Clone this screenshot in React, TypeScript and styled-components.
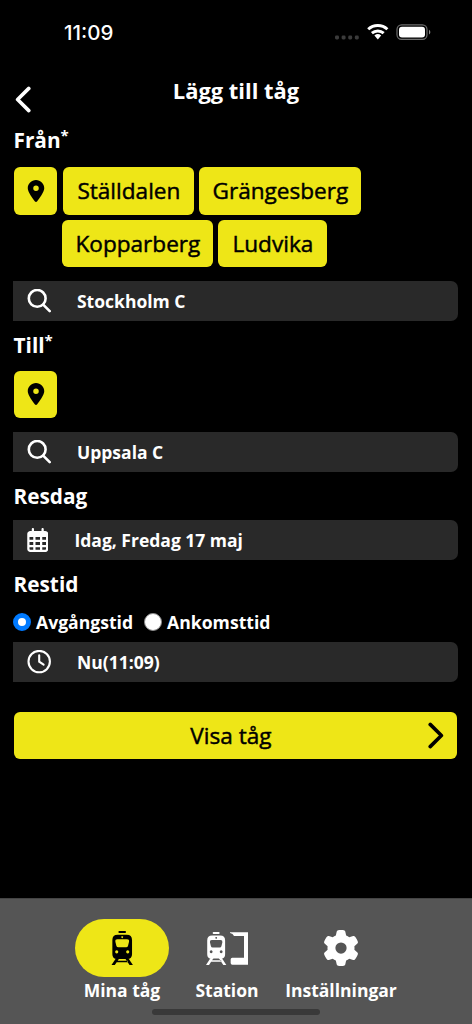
import React, { useState } from "react";
import styled, { createGlobalStyle } from "styled-components";
import { FaGear, FaLocationDot } from "react-icons/fa6";

const GlobalStyle = createGlobalStyle`
  * {
    box-sizing: border-box;
  }
  body {
    margin: 0;
    background: #000;
    font-family: "Open Sans", sans-serif;
  }
  svg {
    display: block;
    flex-shrink: 0;
  }
`;

const Screen = styled.div`
  display: flex;
  flex-direction: column;
  width: 100%;
  height: 1024px;
  background: #000;
  color: #fff;
  overflow: hidden;
`;

const StatusBar = styled.div`
  display: flex;
  align-items: center;
  justify-content: space-between;
  height: 64px;
  padding: 0 41px 0 64px;
`;

const Clock = styled.span`
  font-family: Inter, sans-serif;
  font-size: 20.5px;
  font-weight: 500;
`;

const Header = styled.header`
  display: grid;
  grid-template-columns: 40px 1fr 40px;
  height: 62px;
  padding: 0 14px;
`;

const BackButton = styled.button`
  align-self: start;
  padding: 22px 0 0 1px;
  border: 0;
  background: none;
  color: #fff;
`;

const Title = styled.h1`
  margin: 0;
  font-size: 21.9px;
  font-weight: 700;
  line-height: 54px;
  text-align: center;
`;

const Form = styled.form`
  flex: 1;
  padding: 0 13px;
`;

const Label = styled.h2<{ $height: number; $line: number }>`
  height: ${(p) => p.$height}px;
  margin: 0;
  padding-left: 0.5px;
  font-size: 20.8px;
  font-weight: 700;
  line-height: ${(p) => p.$line}px;

  sup {
    font-size: 15px;
    line-height: 0;
    vertical-align: 7px;
  }
`;

const Shortcuts = styled.div`
  display: flex;
  align-items: flex-start;
  gap: 5px;
  padding-left: 1.4px;
  margin-bottom: 14px;
`;

const Chips = styled.div`
  display: flex;
  flex-wrap: wrap;
  gap: 5px;
  width: 320px;
`;

const YellowButton = styled.button<{ $width?: number; $push?: number }>`
  display: flex;
  align-items: center;
  justify-content: center;
  width: ${(p) => (p.$width ? `${p.$width}px` : "auto")};
  height: 47.5px;
  margin: 0 0 0 ${(p) => p.$push || 0}px;
  padding: 0;
  border: 0;
  border-radius: 6px;
  background: #eee617;
  color: #000;
  font-family: inherit;
  font-size: 22.6px;
  font-weight: 400;
  white-space: nowrap;
  -webkit-text-stroke: 0.45px #000;
`;

const Field = styled.div`
  display: flex;
  align-items: center;
  gap: 26px;
  height: 39.5px;
  margin-left: 0.4px;
  margin-right: 0.6px;
  padding-left: 13.6px;
  border-radius: 0 7px 7px 0;
  background: #292929;
  font-size: 17.5px;
  font-weight: 700;
`;

const Radios = styled.div`
  display: flex;
  align-items: center;
  gap: 11px;
  height: 40px;
`;

const RadioLabel = styled.label`
  display: flex;
  align-items: center;
  gap: 5px;
  font-size: 17.6px;
  font-weight: 700;
`;

const Radio = styled.input`
  appearance: none;
  width: 18px;
  height: 18px;
  margin: 0;
  border: 1px solid #8a8a8a;
  border-radius: 50%;
  background: #fff;

  &:checked {
    border: 5px solid #007aff;
  }
`;

const Submit = styled(YellowButton)`
  display: grid;
  grid-template-columns: 40px 1fr 29px;
  width: 443px;
  margin: 30px 0 0 1.4px;

  span {
    padding-right: 21px;
  }
`;

const Nav = styled.nav`
  position: relative;
  display: flex;
  height: 126px;
  padding: 20px 0 0 69px;
  border-top: 1px solid #444;
  background: #555;
`;

const NavItem = styled.div<{ $width: number }>`
  display: flex;
  flex-direction: column;
  align-items: center;
  width: ${(p) => p.$width}px;
  font-size: 17.5px;
  font-weight: 700;
  line-height: 26px;
`;

const NavIcon = styled.div<{ $active?: boolean }>`
  display: flex;
  align-items: center;
  justify-content: center;
  width: 94px;
  height: 58px;
  border-radius: 29px;
  background: ${(p) => (p.$active ? "#eee617" : "transparent")};
  color: ${(p) => (p.$active ? "#000" : "#fff")};
`;

const HomeIndicator = styled.div`
  position: absolute;
  bottom: 9px;
  left: 152px;
  width: 168px;
  height: 6px;
  border-radius: 3px;
  background: #393939;
`;

const StatusIcons = () => (
  <svg width="96" height="18" viewBox="0 0 96 18" fill="#fff">
    <g fill="#3b3b3b">
      <rect x="0" y="12.5" width="4" height="4" rx="1.4" />
      <rect x="6.6" y="12.5" width="4" height="4" rx="1.4" />
      <rect x="13.2" y="12.5" width="4" height="4" rx="1.4" />
      <rect x="19.8" y="12.5" width="4" height="4" rx="1.4" />
    </g>
    <g fill="none" stroke="#fff" strokeWidth="2.9">
      <path d="M33.2 6.3a14 14 0 0 1 19.2 0" />
      <path d="M36.9 10.2a8.8 8.8 0 0 1 11.8 0" />
    </g>
    <path d="M39.4 12.5a5.2 5.2 0 0 1 6.8 0l-3.4 3.9z" />
    <rect x="62" y="1.8" width="30" height="14.6" rx="4.6" fill="none" stroke="#6d6d6d" strokeWidth="1.2" />
    <rect x="64" y="3.8" width="26" height="10.6" rx="3" />
    <path d="M94 6.8c1.8.8 1.8 3.8 0 4.6z" fill="#8a8a8a" />
  </svg>
);

const SearchIcon = () => (
  <svg width="24" height="24" viewBox="0 0 24 24" fill="none" stroke="currentColor" strokeWidth="2.6" strokeLinecap="round">
    <circle cx="10.2" cy="9.4" r="8.4" />
    <path d="M16.2 15.6l6.5 6.5" />
  </svg>
);

const ClockIcon = () => (
  <svg width="24" height="24" viewBox="0 0 24 24" fill="none" stroke="currentColor" strokeWidth="2.1" strokeLinecap="round">
    <circle cx="12.2" cy="11.6" r="10.7" />
    <path d="M12.2 5.2v6.4l4.4 3" />
  </svg>
);

const CalendarIcon = () => (
  <svg width="21.5" height="24" viewBox="0 0 448 512" fill="currentColor">
    <path
      fillRule="evenodd"
      d="M120 0c13 0 24 11 24 24v40h160V24c0-13 11-24 24-24s24 11 24 24v40h32c35 0 64 29 64 64v320c0 35-29 64-64 64H64c-35 0-64-29-64-64V128c0-35 29-64 64-64h32V24c0-13 11-24 24-24zM48 192v56h80v-56zm128 0v56h96v-56zm144 0v56h80v-56zM48 296v64h80v-64zm128 0v64h96v-64zm144 0v64h80v-64zM48 408v40c0 9 7 16 16 16h64v-56zm128 0v56h96v-56zm144 0v56h64c9 0 16-7 16-16v-40z"
    />
  </svg>
);

const Chevron = ({ flip }: { flip?: boolean }) => (
  <svg width="16" height="27" viewBox="0 0 16 27" fill="none" stroke="currentColor" strokeWidth="3.6" strokeLinecap="round" strokeLinejoin="round">
    <path d={flip ? "M2.2 2.4l11.2 11.1-11.2 11.1" : "M13.8 2.4L2.6 13.5l11.2 11.1"} />
  </svg>
);

const Train = () => (
  <>
    <path
      fillRule="evenodd"
      d="M25 0h17q3 0 3 3t-3 3H25q-3 0-3-3t3-3zM20 11h27q16 0 16 16v43q0 14-14 14H18q-14 0-14-14V27q0-16 16-16zM33.5 15.5a2.8 2.8 0 1 0 .1 0zM19 25q-7 0-6 7l3 12q1 5 6 5h23q5 0 6-5l3-12q1-7-6-7zM17 58a4.6 4.6 0 1 0 .1 0zM50 58a4.6 4.6 0 1 0 .1 0z"
    />
    <path d="M15 82h10L10 104H0zM52 82H42l15 22h10zM17 89h33v5H17z" />
  </>
);

const TrainIcon = () => (
  <svg width="22.4" height="34.7" viewBox="0 0 67 104" fill="currentColor">
    <Train />
  </svg>
);

const StationIcon = () => (
  <svg width="42" height="33" viewBox="0 0 126 99" fill="currentColor">
    <g transform="scale(.91 .95)">
      <Train />
    </g>
    <path d="M72 1h54v97H79q-5 0-5-5V82q0-5 5-5h35V12H84q-3-7-12-9z" />
  </svg>
);

const App = () => {
  const [mode, setMode] = useState("departure");

  return (
    <Screen>
      <GlobalStyle />
      <StatusBar>
        <Clock>11:09</Clock>
        <StatusIcons />
      </StatusBar>
      <Header>
        <BackButton>
          <Chevron />
        </BackButton>
        <Title>Lägg till tåg</Title>
      </Header>

      <Form onSubmit={(e) => e.preventDefault()}>
        <Label $height={41} $line={29}>
          Från<sup>*</sup>
        </Label>
        <Shortcuts>
          <YellowButton type="button" $width={43}>
            <FaLocationDot size={22} />
          </YellowButton>
          <Chips>
            <YellowButton type="button" $width={131} $push={1}>Ställdalen</YellowButton>
            <YellowButton type="button" $width={162}>Grängesberg</YellowButton>
            <YellowButton type="button" $width={151}>Kopparberg</YellowButton>
            <YellowButton type="button" $width={109}>Ludvika</YellowButton>
          </Chips>
        </Shortcuts>
        <Field>
          <SearchIcon />
          Stockholm C
        </Field>

        <Label $height={50} $line={48}>
          Till<sup>*</sup>
        </Label>
        <Shortcuts>
          <YellowButton type="button" $width={43}>
            <FaLocationDot size={22} />
          </YellowButton>
        </Shortcuts>
        <Field>
          <SearchIcon />
          Uppsala C
        </Field>

        <Label $height={48.5} $line={48}>Resdag</Label>
        <Field>
          <CalendarIcon />
          Idag, Fredag 17 maj
        </Field>

        <Label $height={42.5} $line={48}>Restid</Label>
        <Radios>
          <RadioLabel>
            <Radio type="radio" name="mode" checked={mode === "departure"} onChange={() => setMode("departure")} />
            Avgångstid
          </RadioLabel>
          <RadioLabel>
            <Radio type="radio" name="mode" checked={mode === "arrival"} onChange={() => setMode("arrival")} />
            Ankomsttid
          </RadioLabel>
        </Radios>
        <Field>
          <ClockIcon />
          Nu(11:09)
        </Field>

        <Submit>
          <i />
          <span>Visa tåg</span>
          <Chevron flip />
        </Submit>
      </Form>

      <Nav>
        <NavItem $width={106}>
          <NavIcon $active>
            <TrainIcon />
          </NavIcon>
          Mina tåg
        </NavItem>
        <NavItem $width={104}>
          <NavIcon>
            <StationIcon />
          </NavIcon>
          Station
        </NavItem>
        <NavItem $width={124}>
          <NavIcon>
            <FaGear size={36} />
          </NavIcon>
          Inställningar
        </NavItem>
        <HomeIndicator />
      </Nav>
    </Screen>
  );
};

export default App;
